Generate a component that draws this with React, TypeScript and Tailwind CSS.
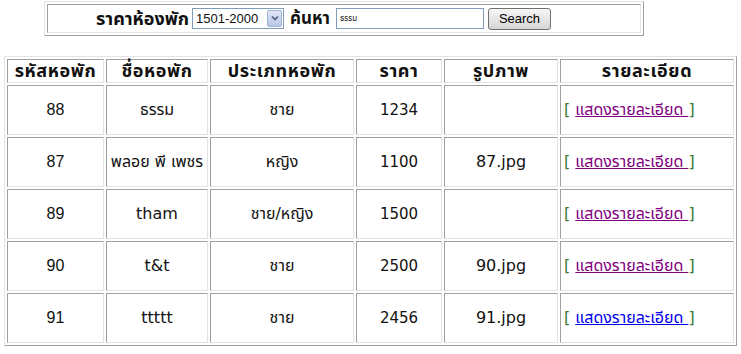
import React from 'react'

type Row = {
  id: string
  name: string
  kind: string
  price: string
  pic: string
  visited: boolean
}

const rows: Row[] = [
  { id: '88', name: 'ธรรม', kind: 'ชาย', price: '1234', pic: '', visited: true },
  { id: '87', name: 'พลอย พี เพชร', kind: 'หญิง', price: '1100', pic: '87.jpg', visited: true },
  { id: '89', name: 'tham', kind: 'ชาย/หญิง', price: '1500', pic: '', visited: true },
  { id: '90', name: 't&t', kind: 'ชาย', price: '2500', pic: '90.jpg', visited: true },
  { id: '91', name: 'ttttt', kind: 'ชาย', price: '2456', pic: '91.jpg', visited: false },
]

const thaiFont = "font-['Tahoma','DejaVu_Sans','Noto_Sans_Thai','Noto_Sans',sans-serif]"
const cell =
  'border border-t-[#a0a0a0] border-l-[#a0a0a0] border-r-[#e3e3e3] border-b-[#e3e3e3] text-center p-0'

export default function App() {
  return (
    <div className="bg-white w-[741px] h-[354px] pt-px text-[#111]">
      {/* search box */}
      <div className="ml-[44px] w-[600px] h-[35px] border border-t-[#e3e3e3] border-l-[#e3e3e3] border-r-[#a0a0a0] border-b-[#a0a0a0] p-[2px]">
        <div className="h-full border border-t-[#a0a0a0] border-l-[#a0a0a0] border-r-[#e3e3e3] border-b-[#e3e3e3] flex items-center pl-[48px]">
          <span className={`${thaiFont} font-bold text-[18px] w-[96px] shrink-0 whitespace-nowrap`}>ราคาห้องพัก</span>
          <div className="shrink-0 w-[92px] h-[21px] border border-[#7f9db9] flex items-center">
            <span className="flex-1 pl-[3px] text-[13px] font-['Liberation_Sans',sans-serif]">1501-2000</span>
            <span className="w-[15px] h-[17px] mr-px rounded-[2px] bg-gradient-to-b from-[#dfe6f5] to-[#b9c6e6] border border-[#a4b3d6] flex items-center justify-center">
              <svg width="8" height="5" viewBox="0 0 8 5">
                <path d="M1 0.5 L4 3.5 L7 0.5" stroke="#4d6185" strokeWidth="1.6" fill="none" />
              </svg>
            </span>
          </div>
          <span className={`${thaiFont} font-bold text-[17px] ml-[6px] w-[46px] shrink-0 whitespace-nowrap`}>ค้นหา</span>
          <div className="shrink-0 w-[148px] h-[21px] border border-[#7f9db9] flex items-center pl-[3px]">
            <span className={`${thaiFont} text-[8px]`}>ธรรม</span>
          </div>
          <button className="shrink-0 ml-[4px] w-[63px] h-[22px] rounded-[3px] border border-[#707070] bg-gradient-to-b from-[#f6f6f6] to-[#d6d6d6] text-[13px] font-['Liberation_Sans',sans-serif] text-black">
            Search
          </button>
        </div>
      </div>

      {/* results */}
      <table className="ml-[4px] mt-[20px] w-[733px] table-fixed border-separate border-spacing-[2px] border border-t-[#e3e3e3] border-l-[#e3e3e3] border-r-[#a0a0a0] border-b-[#a0a0a0]">
        <thead>
          <tr className={`${thaiFont} font-bold text-[18px] leading-[20px] tracking-[0.6px] h-[24px]`}>
            <th className={`${cell} w-[97px]`}>รหัสหอพัก</th>
            <th className={`${cell} w-[102px]`}>ชื่อหอพัก</th>
            <th className={`${cell} w-[144px]`}>ประเภทหอพัก</th>
            <th className={`${cell} w-[86px]`}>ราคา</th>
            <th className={`${cell} w-[114px]`}>รูปภาพ</th>
            <th className={cell}>รายละเอียด</th>
          </tr>
        </thead>
        <tbody>
          {rows.map(r => (
            <tr key={r.id} className="h-[50px]">
              <td className={`${cell} font-['Liberation_Sans',sans-serif] text-[16px]`}>{r.id}</td>
              <td className={`${cell} ${thaiFont} text-[16px]`}>{r.name}</td>
              <td className={`${cell} ${thaiFont} text-[16px]`}>{r.kind}</td>
              <td className={`${cell} font-['DejaVu_Sans',sans-serif] text-[15px]`}>{r.price}</td>
              <td className={`${cell} font-['DejaVu_Sans',sans-serif] text-[16px]`}>{r.pic}</td>
              <td className={`${cell} ${thaiFont} text-[16px] text-left pl-[3px]`}>
                <span className="text-[#3a7a3a]">[ </span>
                <a
                  href="#"
                  className={`underline ${r.visited ? 'text-[#800080]' : 'text-[#0000ee]'}`}
                >
                  แสดงรายละเอียด&nbsp;
                </a>
                <span className="text-[#3a7a3a]">]</span>
              </td>
            </tr>
          ))}
        </tbody>
      </table>
    </div>
  )
}
